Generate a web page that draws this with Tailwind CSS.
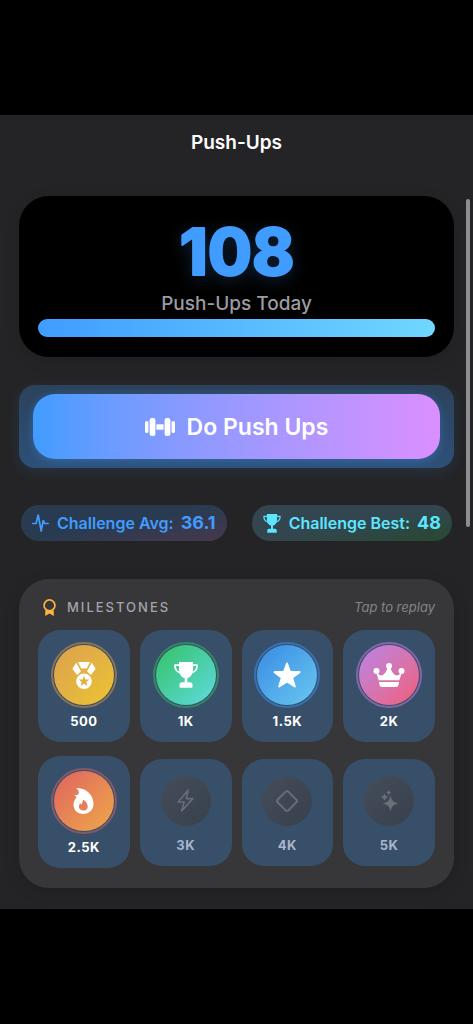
<!DOCTYPE html>
<html lang="en">
<head>
<meta charset="utf-8">
<meta name="viewport" content="width=device-width, initial-scale=1">
<title>Push-Ups</title>
<script src="https://cdn.jsdelivr.net/npm/@tailwindcss/browser@4"></script>
</head>
<body class="bg-black py-[115px] font-['Inter','Liberation_Sans',sans-serif] text-white">
<div class="relative bg-[#242426] pb-[21px]">
  <header class="flex h-[55px] items-center justify-center">
    <h1 class="text-[19px] leading-7 font-semibold">Push-Ups</h1>
  </header>

  <main class="px-[19px] pt-[26px]">
    <section class="rounded-[30px] bg-black px-[19px] pt-6 pb-5 shadow-[0_4px_16px_rgba(0,0,0,0.12)]">
      <svg class="mx-auto block h-[68px] w-40 overflow-visible drop-shadow-[0_4px_8px_rgba(64,156,255,0.2)]" viewBox="0 0 160 68" role="img" aria-label="108">
        <text x="80" y="55" text-anchor="middle" font-size="64" font-weight="800" fill="#409cff" stroke="#409cff" stroke-width="2" stroke-linejoin="round">108</text>
      </svg>
      <p class="text-center text-[19px] leading-[31px] font-medium text-[#9c9ba2]">Push-Ups Today</p>
      <div class="h-[18px] rounded-full bg-linear-to-r from-[#409cff] to-[#70d7ff]" role="progressbar" aria-label="Push-Ups Today" aria-valuenow="100" aria-valuemin="0" aria-valuemax="100"></div>
    </section>

    <div class="mt-7 rounded-2xl bg-[#2c435c] bg-linear-to-b from-[#2c425b] to-[#2d5078] px-[14px] pt-[9px] pb-[9px] shadow-[0_4px_14px_rgba(64,156,255,0.12)]">
      <button class="flex h-[65px] w-full items-center justify-center gap-3 rounded-[22px] bg-linear-to-r from-[#409cff] via-[#9b98ff] to-[#da8fff] text-[23px] leading-8 font-semibold shadow-[0_2px_10px_rgba(64,156,255,0.35)]">
        <svg class="h-[18px] w-[30px]" viewBox="0 0 30 18" fill="#fff" aria-hidden="true">
          <rect x="0" y="3" width="3.4" height="12" rx="1.6"/><rect x="4.6" y="0" width="5.8" height="18" rx="2.3"/><rect x="11.4" y="6.3" width="7.2" height="5.4" rx="0.4"/><rect x="19.6" y="0" width="5.8" height="18" rx="2.3"/><rect x="26.6" y="3" width="3.4" height="12" rx="1.6"/>
        </svg>
        <span>Do Push Ups</span>
      </button>
    </div>

    <div class="mt-[37px] flex justify-between px-[2px]">
      <div class="flex h-9 items-center rounded-full bg-linear-to-br from-[#293b50] from-50% to-[#46374c] pr-[11px] pl-[11px] text-[#409cff]">
        <svg class="mr-2 h-[18px] w-[17px]" viewBox="0 0 17 18" fill="none" stroke="currentColor" stroke-width="1.7" stroke-linecap="round" stroke-linejoin="round" aria-hidden="true"><path d="M.9 9.500h3.200L6.200 1l3 16 2-10.500 1.500 3h3.400"/></svg>
        <span class="text-base leading-6 font-semibold">Challenge Avg:</span>
        <span class="ml-[7px] text-lg leading-6 font-bold">36.1</span>
      </div>
      <div class="flex h-9 items-center rounded-full bg-linear-to-br from-[#33464f] from-50% to-[#274830] pr-[11px] pl-[11px] text-[#5de6ff]">
        <svg class="mr-2 h-[19px] w-[18px]" viewBox="0 0 24 26" aria-hidden="true"><use href="#trophy"/></svg>
        <span class="text-base leading-6 font-semibold">Challenge Best:</span>
        <span class="ml-[7px] text-lg leading-6 font-bold">48</span>
      </div>
    </div>

    <section class="mt-[38px] rounded-[30px] bg-[#373739] px-[19px] pt-[18px] pb-5 shadow-[0_4px_16px_rgba(0,0,0,0.15)]">
      <div class="flex h-5 items-center">
        <svg class="ml-[5px] h-[17px] w-[13px]" viewBox="0 0 12 16" aria-hidden="true">
          <circle cx="6" cy="6" r="5.1" fill="none" stroke="#ffb340" stroke-width="1.600"/><path d="M2 10.300q4 2.200 8 0V16L6 13.700 2 16z" fill="#ffb340"/>
        </svg>
        <h2 class="ml-[11px] text-[13px] leading-5 font-medium tracking-[2px] text-[#a5a4ac]">MILESTONES</h2>
        <span class="ml-auto text-[13px] leading-5 text-[#848488] italic">Tap to replay</span>
      </div>

      <div class="mt-[13px] grid grid-cols-4 items-center gap-x-[10px] gap-y-[14px] text-[13px] leading-4 font-bold tracking-[0.5px]">
        <button class="flex h-28 flex-col items-center rounded-[22px] bg-[#384f69] pt-3">
          <span class="flex size-[66px] items-center justify-center rounded-full border-2 border-[#8b7456] p-[1px]"><span class="flex size-full items-center justify-center rounded-full bg-linear-to-br from-[#dca04d] to-[#ebc52e]">
            <svg class="h-[27px] w-6" viewBox="0 0 24 27" fill="#fff" aria-hidden="true">
              <path d="M6 0h12l-3 6q-.3.600-1 .6h-4q-.7 0-1-.6z"/><path d="M4.300.8 9 9.200 5.200 13 .8 7.500q-.5-.6-.2-1.200zM19.700.8 15 9.200l3.800 3.800 4.400-5.500q.5-.6.2-1.200z"/><circle cx="12" cy="19.200" r="7.800"/><path fill="#e4b03f" d="m12 13.700 1.500 3.700 3.900.2-3 2.500 1 3.800-3.400-2.100-3.400 2.100 1-3.800-3-2.500 3.900-.2z"/>
            </svg></span></span>
          <span class="mt-[5px]">500</span>
        </button>
        <button class="flex h-28 flex-col items-center rounded-[22px] bg-[#384f69] pt-3">
          <span class="flex size-[66px] items-center justify-center rounded-full border-2 border-[#358767] p-[1px]"><span class="flex size-full items-center justify-center rounded-full bg-linear-to-br from-[#34c161] to-[#60dae0]">
            <svg class="h-[26px] w-6" viewBox="0 0 24 26" fill="#fff" aria-hidden="true"><defs><g id="trophy"><path fill="currentColor" d="M5 0h14v7.500c0 4.500-2.600 8-5.700 8.700v4h2.700q2.500 0 2.500 2.500V25q0 .8-.8.8H6.300q-.8 0-.8-.8v-2.300q0-2.500 2.500-2.500h2.700v-4C7.600 15.500 5 12 5 7.500z"/><path fill="none" stroke="currentColor" stroke-width="1.700" stroke-linecap="round" stroke-linejoin="round" d="M5.500 3.200H1q-.5 6.500 6.500 8M18.500 3.200H23q.5 6.500-6.500 8"/></g></defs><use href="#trophy"/></svg></span></span>
          <span class="mt-[5px]">1K</span>
        </button>
        <button class="flex h-28 flex-col items-center rounded-[22px] bg-[#384f69] pt-3">
          <span class="flex size-[66px] items-center justify-center rounded-full border-2 border-[#3771b3] p-[1px]"><span class="flex size-full items-center justify-center rounded-full bg-linear-to-br from-[#398ae4] to-[#6ac8ee]">
            <svg class="h-[26px] w-7" viewBox="0 0 28 26" fill="#fff" stroke="#fff" stroke-width="2" stroke-linejoin="round" aria-hidden="true"><path d="m14 1.500 3 8.300 9.500.3-7.400 5.500 2.700 8.900-7.800-5.200-7.800 5.200 2.700-8.900L1.500 10.100l9.500-.3z"/></svg></span></span>
          <span class="mt-[5px]">1.5K</span>
        </button>
        <button class="flex h-28 flex-col items-center rounded-[22px] bg-[#384f69] pt-3">
          <span class="flex size-[66px] items-center justify-center rounded-full border-2 border-[#8167aa] p-[1px]"><span class="flex size-full items-center justify-center rounded-full bg-linear-to-br from-[#b783e8] to-[#f15b77]">
            <svg class="h-6 w-8" viewBox="0 0 32 24" fill="#fff" aria-hidden="true">
              <circle cx="16" cy="3" r="3"/><circle cx="3.500" cy="8" r="3"/><circle cx="28.500" cy="8" r="3"/><path d="M3.200 9.500q4.800 4.500 7.300 2Q13.200 9.500 14.800 4h2.400q1.600 5.500 4.300 7.500 2.500 2.500 7.300-2L26.300 17.300H5.700z"/><path d="M5.900 19h20.200l-.6 2.900q-.4 2.100-2.500 2.100H9q-2.100 0-2.500-2.100z"/>
            </svg></span></span>
          <span class="mt-[5px]">2K</span>
        </button>
        <button class="flex h-28 flex-col items-center rounded-[22px] bg-[#384f69] pt-3">
          <span class="flex size-[66px] items-center justify-center rounded-full border-2 border-[#875968] p-[1px]"><span class="flex size-full items-center justify-center rounded-full bg-linear-to-br from-[#df625e] to-[#eea846]">
            <svg class="h-[26px] w-[21px]" viewBox="0 0 21 26" aria-hidden="true"><path fill="#fff" d="M3.300 0C13-.2 20.500 7 20.500 15.800 20.500 22 16 26 10.300 26 4.500 26 .5 22 .5 16.500.5 13 2.500 11 3.600 9c-1-.4-1.600-1.200-1.900-2.200C3.200 7.200 4.800 7 5.500 6 6.300 4.500 5.500 2 3.300 0z"/><path fill="#e77f54" d="M9.700 11.500c.6 2-.9 3.400-1 5-.8-.2-1.100-.7-1.500-1.300-2.400 3.200-1.200 7.200 3.200 7.300 4 0 5-3.500 3.800-6.300-.8-1.900-2.300-3.700-4.500-4.700z"/></svg></span></span>
          <span class="mt-[5px]">2.5K</span>
        </button>
        <button class="flex h-[107px] flex-col items-center rounded-[22px] bg-[#384f69] pt-[17px] text-[#a8b5cd]">
          <span class="flex size-[50px] items-center justify-center rounded-full bg-linear-to-br from-[#454d5b] to-[#38404c]">
            <svg class="h-[23px] w-[17px]" viewBox="0 0 17 23" fill="none" stroke="#686d76" stroke-width="1.600" stroke-linejoin="round" aria-hidden="true"><path d="M11.200 1 1.200 13h5.900L4.600 22 15.800 9.600H9.300z"/></svg></span>
          <span class="mt-[11px]">3K</span>
        </button>
        <button class="flex h-[107px] flex-col items-center rounded-[22px] bg-[#384f69] pt-[17px] text-[#a8b5cd]">
          <span class="flex size-[50px] items-center justify-center rounded-full bg-linear-to-br from-[#454d5b] to-[#38404c]">
            <svg class="size-6" viewBox="0 0 24 24" fill="none" stroke="#686d76" stroke-width="2" aria-hidden="true"><rect x="4.500" y="4.500" width="15" height="15" rx="1.800" transform="rotate(45 12 12)"/></svg></span>
          <span class="mt-[11px]">4K</span>
        </button>
        <button class="flex h-[107px] flex-col items-center rounded-[22px] bg-[#384f69] pt-[17px] text-[#a8b5cd]">
          <span class="flex size-[50px] items-center justify-center rounded-full bg-linear-to-br from-[#454d5b] to-[#38404c]">
            <svg class="h-[21px] w-[17px]" viewBox="0 0 17 21" fill="#6c7179" stroke="#6c7179" stroke-width=".6" stroke-linejoin="round" aria-hidden="true"><path d="M9.500 6.500q.8 6 7 7-6.200 1-7 7-.8-6-7-7 6.200-1 7-7zM3.500 4q.4 2.700 3.100 3.100-2.700.4-3.100 3.100Q3.100 7.500.4 7.100 3.100 6.700 3.500 4zM7.700.4q.3 1.900 2.100 2.200-1.800.3-2.100 2.200-.3-1.900-2.100-2.200Q7.400 2.300 7.700.4z"/></svg></span>
          <span class="mt-[11px]">5K</span>
        </button>
      </div>
    </section>
  </main>

  <div class="absolute top-[84px] right-[3px] h-[328px] w-1 rounded-full bg-[#8e8e90]" aria-hidden="true"></div>
</div>
</body>
</html>
